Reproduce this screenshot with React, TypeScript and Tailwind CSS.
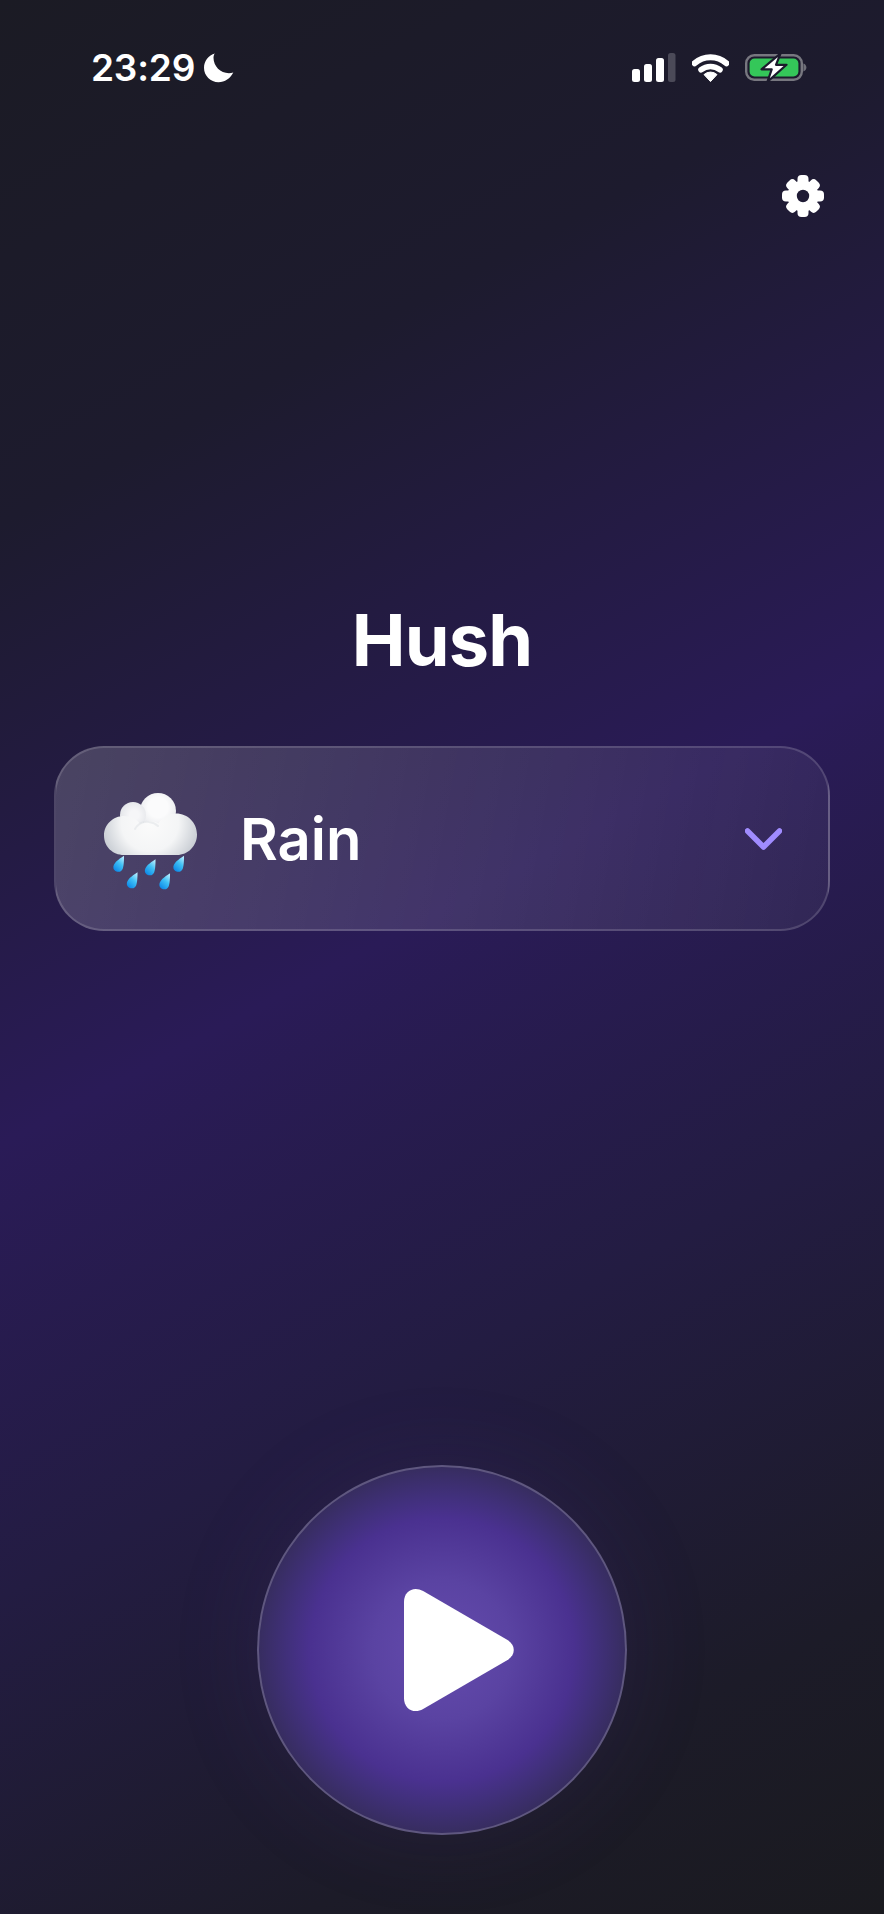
import React from "react";

function Moon() {
  return (
    <svg width="30" height="30" viewBox="0 0 30 30" className="block">
      <path d="M11 0.5C4.5 2.2 0 8 0 14.7 0 22.7 6.5 29.2 14.5 29.2c6.3 0 11.9-4 14.8-9.8-1.4.5-2.9.8-4.4.8-8.5 0-15.4-6.9-15.4-15.4 0-1.7.5-3.4 1.5-4.8z" fill="#fff" />
    </svg>
  );
}

function Signal() {
  return (
    <svg width="44" height="29" viewBox="0 0 44 29" className="block">
      <rect x="0" y="16" width="8" height="13" rx="2.5" fill="#fff" />
      <rect x="12" y="11" width="8" height="18" rx="2.5" fill="#fff" />
      <rect x="24" y="5" width="8" height="24" rx="2.5" fill="#fff" />
      <rect x="36" y="0" width="7.5" height="29" rx="2.5" fill="#4b4a58" />
    </svg>
  );
}

function Wifi() {
  return (
    <svg width="37" height="29" viewBox="0 0 37 29" className="block" fill="none">
      <path d="M2.6 10.2A24 24 0 0 1 34.4 10.2" stroke="#fff" strokeWidth="6" strokeLinecap="round" />
      <path d="M9 16.800A15.200 15.200 0 0 1 28 16.800" stroke="#fff" strokeWidth="5.6" strokeLinecap="round" />
      <path d="M18.5 28.6L12 21.6A9.6 9.6 0 0 1 25 21.6Z" fill="#fff" stroke="#fff" strokeLinejoin="round" />
    </svg>
  );
}

function Battery() {
  return (
    <svg width="62" height="29" viewBox="0 0 62 29" className="block" fill="none">
      <rect x="1.2" y="2.2" width="55.6" height="24.6" rx="8" stroke="#77777f" strokeWidth="2.4" />
      <rect x="4.6" y="5.6" width="48.8" height="17.8" rx="5" fill="#34c759" />
      <path d="M58.4 10.5c1.8.6 3 2.2 3 4s-1.2 3.400-3 4z" fill="#6f6f78" />
      <path d="M35.5 0.5L16.500 16.300h10.200L22.400 28.800 41.500 11.800H31z" fill="#fff" stroke="#1c1a2c" strokeWidth="2.2" strokeLinejoin="round" />
    </svg>
  );
}

function Gear() {
  return (
    <svg width="42" height="42" viewBox="0 0 42 42" className="block">
      <defs>
        <mask id="gearHole">
          <rect width="42" height="42" fill="#fff" />
          <circle cx="21" cy="21" r="6.200" fill="#000" />
        </mask>
      </defs>
      <g mask="url(#gearHole)" fill="#fff">
        <circle cx="21" cy="21" r="15.500" />
        <rect x="15.500" y="0" width="11" height="42" rx="4" />
        <rect x="15.500" y="0.500" width="11" height="41" rx="4" transform="rotate(45 21 21)" />
        <rect x="15.500" y="0" width="11" height="42" rx="4" transform="rotate(90 21 21)" />
        <rect x="15.500" y="0.500" width="11" height="41" rx="4" transform="rotate(135 21 21)" />
      </g>
    </svg>
  );
}

function Drop({ x, y }: { x: number; y: number }) {
  return (
    <path
      transform={`translate(${x} ${y}) scale(0.92)`}
      d="M6 -9.500C3.500 -7.500 -4.600 -3.400 -5.600 2.200A5.300 5.300 0 0 0 4.600 4.600C6.200 0.600 6 -9.500 6 -9.500Z"
      fill="url(#dropGrad)"
    />
  );
}

function RainCloud() {
  return (
    <svg width="93" height="98" viewBox="0 0 93 98" className="block shrink-0 mt-[6px]">
      <defs>
        <linearGradient id="dropGrad" x1="0.8" y1="0" x2="0.2" y2="1">
          <stop offset="0" stopColor="#b5ecff" />
          <stop offset="0.45" stopColor="#3fc0f5" />
          <stop offset="1" stopColor="#0a86e6" />
        </linearGradient>
        <radialGradient id="cloudGrad" gradientUnits="userSpaceOnUse" cx="46" cy="30" r="52">
          <stop offset="0" stopColor="#fbfbfb" />
          <stop offset="0.55" stopColor="#f4f5f6" />
          <stop offset="1" stopColor="#c3c8cf" />
        </radialGradient>
        <radialGradient id="puff" cx="0.5" cy="0.4" r="0.7">
          <stop offset="0.4" stopColor="#fbfbfc" />
          <stop offset="1" stopColor="#e0e2e6" />
        </radialGradient>
        <radialGradient id="puffDim" cx="0.55" cy="0.5" r="0.6">
          <stop offset="0.3" stopColor="#f6f6f8" />
          <stop offset="1" stopColor="#e2e4e8" />
        </radialGradient>
      </defs>
      <circle cx="54" cy="18" r="18" fill="url(#puff)" />
      <circle cx="29" cy="22" r="13" fill="url(#puffDim)" />
      <path
        d="M20 62C8.500 62 0 53.500 0 42.500 0 31.500 9 23 20 23c7 0 13 3 16 8 3-2 6-3 10-3 3 0 6 1 8.500 2.500C58 24.500 65 20.500 72 20.500 84 20.500 93 30 93 41.500 93 53 84 62 73 62Z"
        fill="url(#cloudGrad)"
      />
      <path d="M31 36c3-5 8-8 14-7 4 .5 7 2 9 4" fill="none" stroke="#dfe1e5" strokeWidth="2" strokeLinecap="round" opacity="0.55" />
      <Drop x={14.5} y={71.5} />
      <Drop x={46} y={75} />
      <Drop x={74.5} y={71.5} />
      <Drop x={28} y={88} />
      <Drop x={60.5} y={89} />
    </svg>
  );
}

export default function App() {
  return (
    <div
      className="w-[884px] h-[1914px] overflow-hidden flex flex-col text-white bg-[linear-gradient(152deg,#1b1b24_0%,#1d1b2e_22%,#2a1b57_48%,#231c42_67%,#1c1b28_87%,#1a1a1f_100%)]"
      style={{ fontFamily: "Inter, 'Liberation Sans', sans-serif" }}
    >
      <div className="mt-[53px] h-[29px] pl-[91px] pr-[77px] flex items-center justify-between">
        <div className="flex items-center gap-[9px]">
          <span className="text-[37px] leading-[29px] font-semibold tracking-[-0.2px]">23:29</span>
          <Moon />
        </div>
        <div className="flex items-center gap-[16px]">
          <Signal />
          <Wifi />
          <Battery />
        </div>
      </div>

      <div className="mt-[93px] pr-[60px] flex justify-end">
        <Gear />
      </div>

      <h1 className="mt-[379px] h-[88px] text-center text-[72px] leading-[88px] font-bold tracking-[-0.8px]">Hush</h1>

      <button className="mt-[62px] mx-[54px] h-[185px] shrink-0 rounded-[50px] border-2 border-white/15 bg-[linear-gradient(100deg,rgba(255,255,255,0.18),rgba(255,255,255,0.05))] flex items-center pl-[48px] pr-[46px] text-white">
        <RainCloud />
        <span className="ml-[43px] text-[58px] leading-none font-semibold">Rain</span>
        <svg width="37" height="22" viewBox="0 0 37 22" fill="none" className="ml-auto block">
          <path d="M2.500 3L18.500 19 34.500 3" stroke="#a08cff" strokeWidth="5.500" strokeLinecap="round" strokeLinejoin="round" />
        </svg>
      </button>

      <div className="mt-[534px] flex justify-center">
        <button className="w-[370px] h-[370px] rounded-full border-2 border-white/20 flex items-center justify-center shadow-[0_0_90px_rgba(90,60,170,0.14)] bg-[radial-gradient(circle_closest-side,#654bae_0%,#5a43a2_38%,#4a3190_72%,#41307c_84%,#372d60_100%)]">
          <svg width="110" height="124" viewBox="0 0 112 126" className="block ml-[33px]">
            <path d="M0 14C0 3 10 -2.500 19.500 3L105 52.500C114 58 114 68 105 73.500L19.500 123C10 128.500 0 123 0 112Z" fill="#fff" />
          </svg>
        </button>
      </div>
    </div>
  );
}
